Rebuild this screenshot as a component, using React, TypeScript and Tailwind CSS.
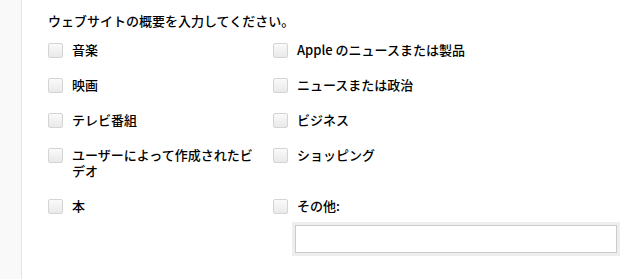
const left = ['音楽', '映画', 'テレビ番組', 'ユーザーによって作成されたビデオ', '本'];
const right = ['Apple のニュースまたは製品', 'ニュースまたは政治', 'ビジネス', 'ショッピング', 'その他:'];

function Box() {
  return (
    <span className="mt-px h-[15px] w-[15px] shrink-0 rounded-[2px] border border-[#d4d4d4] bg-gradient-to-b from-[#fafafa] to-[#e9e9e9]" />
  );
}

function Item({ label, children }: { label: string; children?: React.ReactNode }) {
  return (
    <div>
      <label className="flex items-start gap-[9px]">
        <Box />
        <span className="leading-[16px]">{label}</span>
      </label>
      {children}
    </div>
  );
}

export default function App() {
  const rows = left.map((l, i) => [l, right[i]]);
  return (
    <div
      className="flex h-[279px] w-full bg-white text-[13px] font-medium text-black"
      style={{ fontFamily: '"Noto Sans CJK JP", "Noto Sans", sans-serif' }}
    >
      <div className="w-[22px] shrink-0 border-r border-[#e4e4e4] bg-[#f9f9f9]" />
      <div className="pl-[26px] pt-[13px]">
        <p className="leading-[16px]">ウェブサイトの概要を入力してください。</p>
        <div className="mt-[13px] grid grid-cols-[225px_360px] gap-y-[19px]">
          {rows.map(([l, r], i) => (
            <div key={i} className="contents">
              <div className="pr-[12px]">
                <Item label={l} />
              </div>
              <Item label={r}>
                {i === 4 && (
                  <input
                    type="text"
                    className="ml-[22px] mt-[11px] h-[28px] w-[322px] border border-[#cccccc] bg-white outline-none ring-[3px] ring-[#eeeeee]"
                  />
                )}
              </Item>
            </div>
          ))}
        </div>
      </div>
    </div>
  );
}
